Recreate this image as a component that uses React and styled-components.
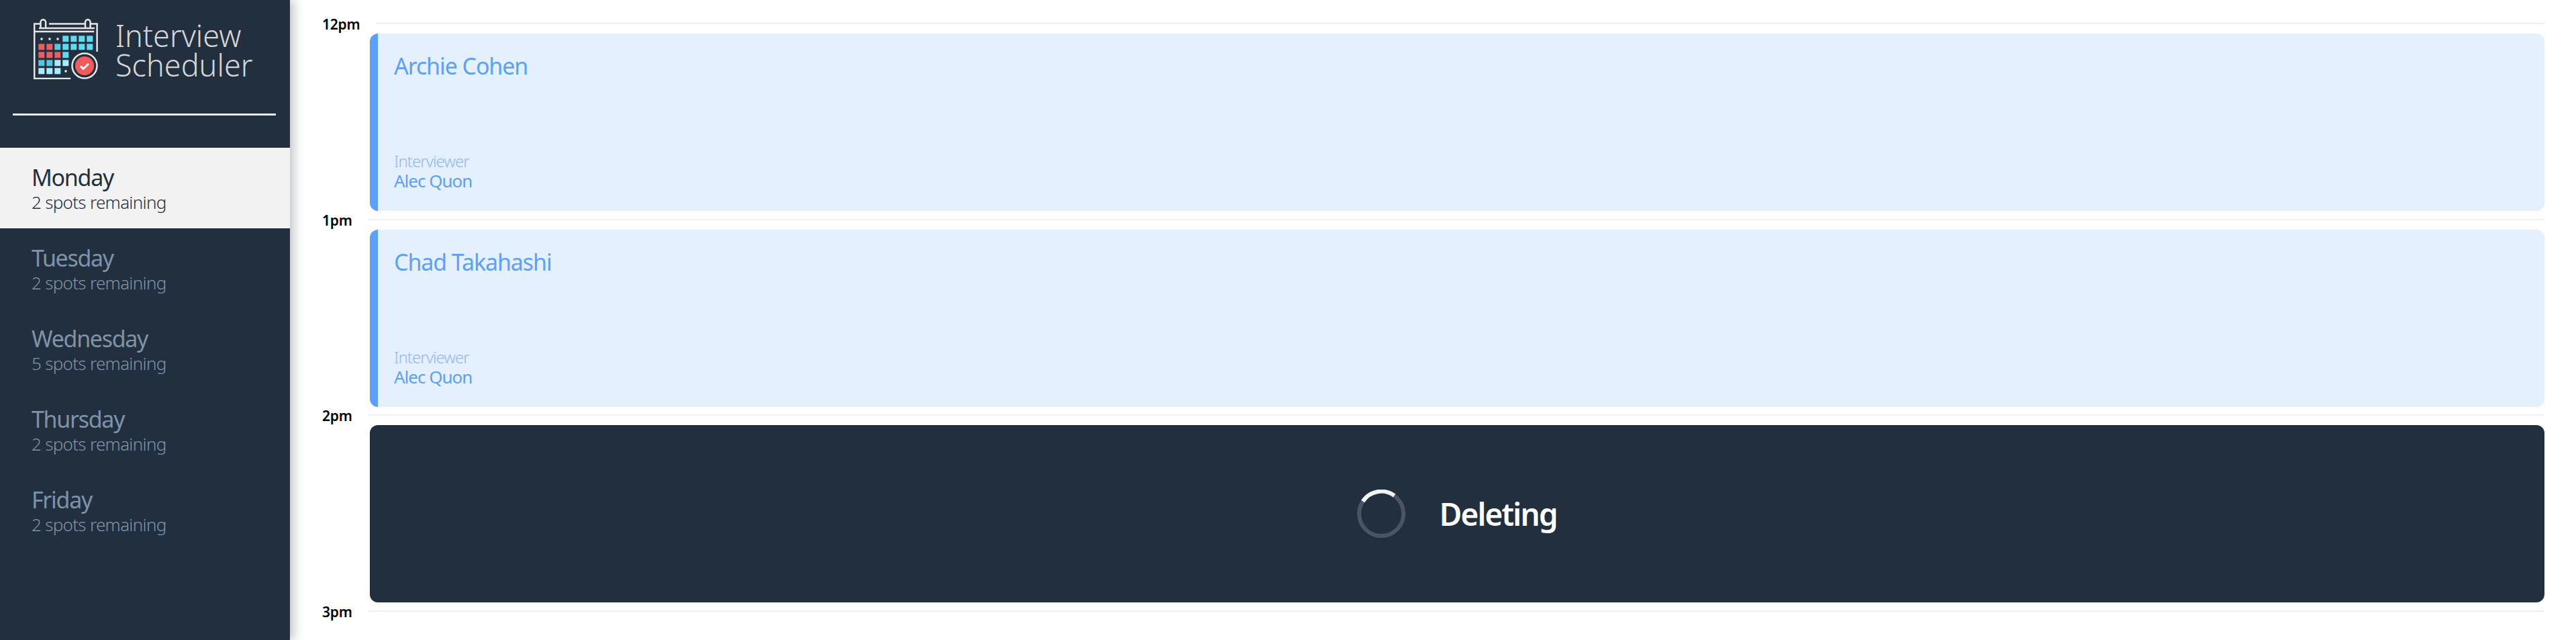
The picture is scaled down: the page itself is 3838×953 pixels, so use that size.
import React from "react";
import styled, { createGlobalStyle } from "styled-components";

const GlobalStyle = createGlobalStyle`
  html, body {
    margin: 0;
    height: 100%;
    background: #fff;
    font-family: "Noto Sans", "Liberation Sans", sans-serif;
  }
`;

const Layout = styled.main`
  display: flex;
  height: 953px;
  overflow: hidden;
`;

const Sidebar = styled.nav`
  flex: 0 0 432px;
  display: flex;
  flex-direction: column;
  background: #222f3e;
  box-shadow: 6px 0 14px rgba(34, 47, 62, 0.28);
  position: relative;
  z-index: 1;
`;

const Brand = styled.div`
  display: flex;
  align-items: flex-start;
  gap: 26px;
  height: 169px;
  padding: 28px 0 0 50px;
  box-sizing: border-box;
`;

const BrandName = styled.div`
  margin-top: 3px;
  font-weight: 300;
  font-size: 45px;
  line-height: 44px;
  letter-spacing: 0;
  color: #d6d6d6;
`;

const Separator = styled.hr`
  width: 392px;
  height: 3px;
  margin: 0 0 48px 19px;
  border: 0;
  background: #e8eef0;
`;

const DayList = styled.ul`
  list-style: none;
  margin: 0;
  padding: 0;
`;

const DayItem = styled.li`
  height: 120px;
  box-sizing: border-box;
  padding: 23px 0 0 47px;
  background: ${({ $selected }) => ($selected ? "#f2f2f2" : "transparent")};
  color: ${({ $selected }) => ($selected ? "#222f3e" : "#7f93a8")};
`;

const DayName = styled.h2`
  margin: 0;
  font-weight: 400;
  font-size: 34px;
  line-height: 42px;
  letter-spacing: -1.3px;
`;

const Spots = styled.h3`
  margin: 0;
  font-weight: 300;
  font-size: 26px;
  line-height: 32px;
  letter-spacing: -0.7px;
`;

const Schedule = styled.section`
  flex: 1;
  padding: 14px 47px 0 48px;
`;

const Slot = styled.article`
  height: 291.6px;
`;

const TimeRow = styled.header`
  display: flex;
  align-items: center;
  gap: 23px;
  height: 42px;
`;

const Time = styled.h4`
  margin: 2px 0 0;
  font-weight: 600;
  font-size: 21px;
  letter-spacing: -0.2px;
  color: #000;
`;

const TimeRule = styled.hr`
  flex: 1;
  height: 2px;
  margin: 0;
  border: 0;
  background: #f0f0f0;
`;

const CardBase = styled.div`
  height: 264px;
  margin: -6px 0 0 71px;
  border-radius: 12px;
  box-sizing: border-box;
`;

const ShowCard = styled(CardBase)`
  display: flex;
  flex-direction: column;
  justify-content: space-between;
  padding: 26px 24px 30px 24px;
  background: #e4f0fd;
  border-left: 12px solid #5ba0fd;
  color: #5ba0fd;
`;

const Student = styled.h2`
  margin: 0;
  font-weight: 400;
  font-size: 34px;
  line-height: 44px;
  letter-spacing: -1.1px;
`;

const InterviewerLabel = styled.h4`
  margin: 0;
  font-weight: 300;
  font-size: 24px;
  line-height: 28px;
  letter-spacing: -1px;
  color: #94b6fb;
`;

const InterviewerName = styled.h3`
  margin: 0;
  font-weight: 400;
  font-size: 26px;
  line-height: 30px;
  letter-spacing: -1px;
`;

const StatusCard = styled(CardBase)`
  display: flex;
  align-items: center;
  justify-content: center;
  gap: 50px;
  background: #222f3e;
  color: #fff;
`;

const StatusText = styled.h1`
  margin: 0;
  font-weight: 600;
  font-size: 46px;
  letter-spacing: -1.9px;
`;

const RED = "#f15b5b";
const CYAN = "#5bdcf3";
const TEAL = "#4fc8e4";
const PALE = "#a5eefd";

// cells of the logo calendar, row by row, null leaves the cell empty
const logoCells = [
  [null, null, null, CYAN, CYAN, CYAN, CYAN],
  [RED, RED, TEAL, CYAN, CYAN, CYAN, CYAN],
  [RED, RED, RED, CYAN],
  [TEAL, TEAL, PALE, PALE],
  [PALE, PALE, PALE],
];

const CalendarLogo = () => (
  <svg width="96" height="90" viewBox="0 0 96 90" fill="none">
    <g stroke="#e6e6e6" strokeWidth="2.500">
      <path d="M1.200 19V7.500H10.500M10.500 14V5a3.800 3.800 0 0 1 7.600 0v9M77 14V5a3.800 3.800 0 0 1 7.600 0v9M23 7.500h54M8 14h83M84.600 7.500h10v41.500M1.200 19h89M1.200 19v70h54" />
      <circle cx="76" cy="70" r="18.500" />
    </g>
    {logoCells.map((row, r) =>
      row.map(
        (fill, c) =>
          fill && <rect key={`${r}-${c}`} x={7.3 + c * 12} y={25.3 + r * 12} width="9" height="9" fill={fill} />
      )
    )}
    <path d="M10.500 28.500h3v3h-3zM22.500 28.500h3v3h-3zM34.500 28.500h3v3h-3zM46.500 76.500h3v3h-3z" fill="#fff" />
    <circle cx="76" cy="70" r="14" fill={RED} />
    <path d="M70 70.500l4 4 8-7.500" stroke="#fff" strokeWidth="3" fill="none" />
  </svg>
);

const Spinner = () => (
  <svg width="72" height="72" viewBox="0 0 72 72" fill="none">
    <circle cx="36" cy="36" r="33" stroke="#4a5561" strokeWidth="6" />
    <path d="M8.500 17.500a33 33 0 0 1 47-8.500" stroke="#f2f2f2" strokeWidth="6" />
  </svg>
);

const days = [
  ["Monday", 2],
  ["Tuesday", 2],
  ["Wednesday", 5],
  ["Thursday", 2],
  ["Friday", 2],
];

const TimeHeader = ({ time }) => (
  <TimeRow>
    <Time>{time}</Time>
    <TimeRule />
  </TimeRow>
);

const App = () => (
  <Layout>
    <GlobalStyle />
    <Sidebar>
      <Brand>
        <CalendarLogo />
        <BrandName>
          Interview
          <br />
          Scheduler
        </BrandName>
      </Brand>
      <Separator />
      <DayList>
        {days.map(([name, spots], i) => (
          <DayItem key={name} $selected={i === 0}>
            <DayName>{name}</DayName>
            <Spots>{spots} spots remaining</Spots>
          </DayItem>
        ))}
      </DayList>
    </Sidebar>
    <Schedule>
      <Slot>
        <TimeHeader time="12pm" />
        <ShowCard>
          <Student>Archie Cohen</Student>
          <div>
            <InterviewerLabel>Interviewer</InterviewerLabel>
            <InterviewerName>Alec Quon</InterviewerName>
          </div>
        </ShowCard>
      </Slot>
      <Slot>
        <TimeHeader time="1pm" />
        <ShowCard>
          <Student>Chad Takahashi</Student>
          <div>
            <InterviewerLabel>Interviewer</InterviewerLabel>
            <InterviewerName>Alec Quon</InterviewerName>
          </div>
        </ShowCard>
      </Slot>
      <Slot>
        <TimeHeader time="2pm" />
        <StatusCard>
          <Spinner />
          <StatusText>Deleting</StatusText>
        </StatusCard>
      </Slot>
      <Slot>
        <TimeHeader time="3pm" />
      </Slot>
    </Schedule>
  </Layout>
);

export default App;
